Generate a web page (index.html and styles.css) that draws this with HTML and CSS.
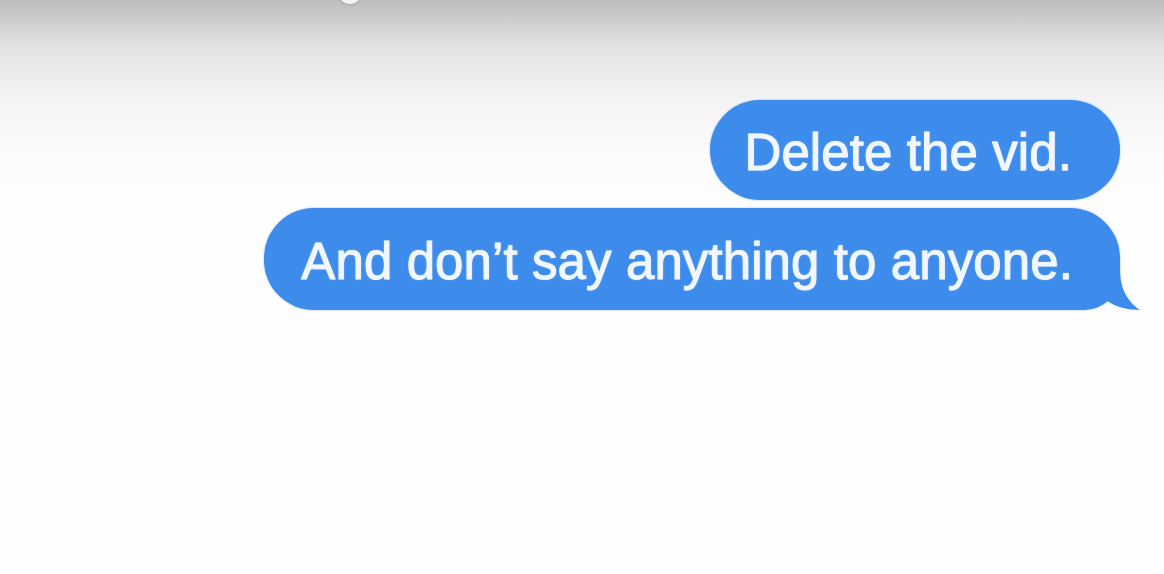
FILE: index.html
```html
<!DOCTYPE html>
<html>
<head>
<meta charset="utf-8">
<link rel="stylesheet" href="styles.css">
</head>
<body>
<div class="screen">
  <div class="dot"></div>
  <div class="thread">
    <div class="bubble first">Delete the vid.</div>
    <div class="bubble last">And don’t say anything to anyone.
      <svg class="tail" width="44" height="44" viewBox="0 0 44 44"><path d="M0 0 H22 C22 16 26 31 42 42 C30 42 18 39 9 33 C4 35 0 35 0 35 Z" fill="#3d8cec"/></svg>
    </div>
  </div>
</div>
</body>
</html>
```
FILE: styles.css
```css
html, body {
  margin: 0;
  padding: 0;
}
.screen {
  position: relative;
  width: 1164px;
  height: 574px;
  overflow: hidden;
  background: linear-gradient(to bottom, #bdbdbd 0px, #e4e4e4 50px, #f4f4f4 100px, #fcfcfc 160px, #fefefe 220px, #fefefe 100%);
  font-family: "Liberation Sans", Arial, sans-serif;
}
.dot {
  position: absolute;
  left: 338px;
  top: -20px;
  width: 24px;
  height: 24px;
  border-radius: 50%;
  background: #f2f2f2;
  box-shadow: 0 1px 2px rgba(0,0,0,0.15);
}
.thread {
  display: flex;
  flex-direction: column;
  align-items: flex-end;
  gap: 8px;
  padding: 100px 44px 0 0;
}
.bubble {
  position: relative;
  background: #3d8cec;
  color: #f2f7ff;
  font-size: 51px;
  line-height: 106px;
  height: 100px;
  border-radius: 50px;
  padding: 0 48px 0 34px;
  white-space: nowrap;
  letter-spacing: 0.1px;
  -webkit-text-stroke: 0.9px #f2f7ff;
  text-shadow: 0 0 2px rgba(220,235,255,0.8);
  box-shadow: 0 0 2px rgba(61,140,236,0.6);
}
.bubble.last {
  height: 102px;
  line-height: 108px;
  padding-left: 37px;
  padding-right: 47px;
  border-bottom-right-radius: 36px;
}
.tail {
  position: absolute;
  right: -22px;
  bottom: -2px;
}
```
